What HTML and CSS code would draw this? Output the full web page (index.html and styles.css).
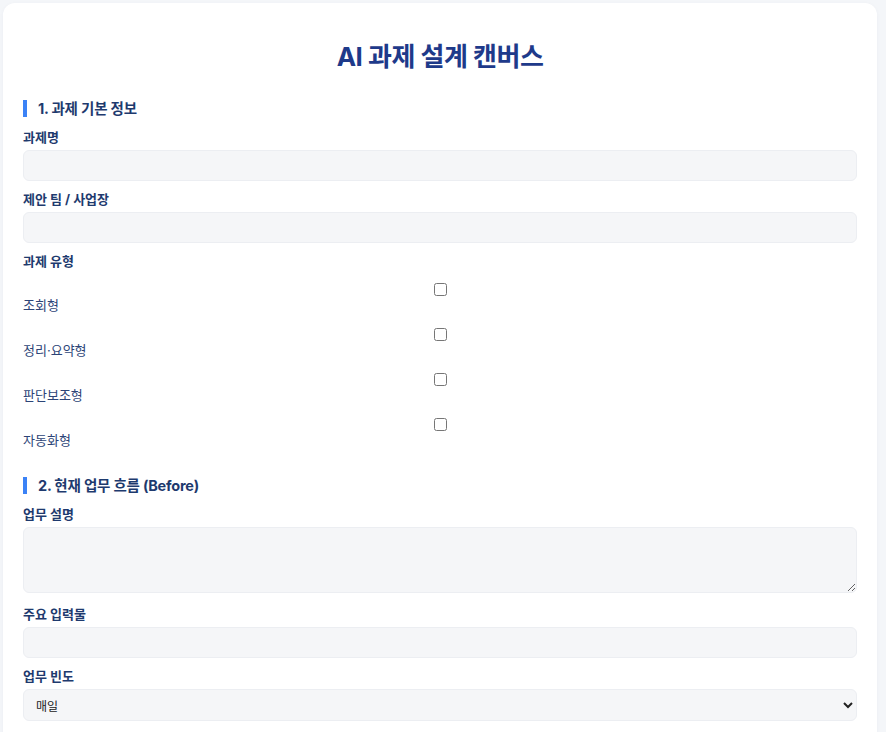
FILE: index.html
```html
<!DOCTYPE html>
<html lang="ko">
<head>
<meta charset="utf-8">
<title>AI 과제 설계 캔버스</title>
<link rel="stylesheet" href="styles.css">
</head>
<body>
<div class="card">
  <h1 class="title">AI 과제 설계 캔버스</h1>

  <section class="section">
    <h2 class="section-title">1. 과제 기본 정보</h2>
    <div class="field">
      <label class="label">과제명</label>
      <input class="control" type="text">
    </div>
    <div class="field">
      <label class="label">제안 팀 / 사업장</label>
      <input class="control" type="text">
    </div>
    <div class="field">
      <label class="label">과제 유형</label>
      <div class="options">
        <label class="option"><input class="check" type="checkbox"><span>조회형</span></label>
        <label class="option"><input class="check" type="checkbox"><span>정리·요약형</span></label>
        <label class="option"><input class="check" type="checkbox"><span>판단보조형</span></label>
        <label class="option"><input class="check" type="checkbox"><span>자동화형</span></label>
      </div>
    </div>
  </section>

  <section class="section">
    <h2 class="section-title">2. 현재 업무 흐름 (Before)</h2>
    <div class="field field-area">
      <label class="label">업무 설명</label>
      <textarea class="control area"></textarea>
    </div>
    <div class="field">
      <label class="label">주요 입력물</label>
      <input class="control" type="text">
    </div>
    <div class="field">
      <label class="label">업무 빈도</label>
      <select class="control select">
        <option>매일</option>
        <option>매주</option>
        <option>매월</option>
      </select>
    </div>
  </section>
</div>
</body>
</html>
```

FILE: styles.css
```css
* { box-sizing: border-box; }

html, body {
  margin: 0;
  background: #f4f6f9;
}

body {
  padding: 3px 0 0 3px;
  font-family: "Inter", "Noto Sans CJK KR", sans-serif;
  color: #1e3a6e;
}

.card {
  width: 874px;
  min-height: 760px;
  background: #ffffff;
  border-radius: 12px;
  padding: 20px 20px 20px 20px;
  box-shadow: 0 1px 4px rgba(30, 50, 90, 0.04);
}

.title {
  margin: 18px 0 0;
  font-size: 26px;
  line-height: 32px;
  font-weight: 700;
  text-align: center;
  color: #1e3a8a;
  letter-spacing: -0.5px;
}

.section { margin-top: 27px; }
.section + .section { margin-top: 28px; }

.section-title {
  margin: 0;
  font-size: 14.5px;
  line-height: 17px;
  font-weight: 700;
  color: #1e3a6e;
  border-left: 4px solid #3b82f6;
  padding-left: 11px;
  letter-spacing: -0.2px;
}

.field { margin-top: 10px; }
.field + .field { margin-top: 8px; }
.field-area { padding-bottom: 3px; }

.label {
  display: block;
  font-size: 13px;
  line-height: 20px;
  font-weight: 700;
  color: #1e3a6e;
  margin-bottom: 3px;
}

.control {
  display: block;
  width: 100%;
  height: 31px;
  margin: 0;
  padding: 8px;
  border: 1px solid #eceef2;
  border-radius: 6px;
  background: #f5f6f8;
  font-family: "Inter", "Noto Sans CJK KR", sans-serif;
  font-size: 12px;
  color: #222;
}

.area {
  height: 66px;
  resize: vertical;
}

.select { height: 32px; }

.options { padding-top: 9px; }

.option {
  display: block;
  margin-bottom: 14px;
  font-size: 13px;
  line-height: 18px;
  color: #2c4477;
}

.option span { display: block; }

.option:last-child { margin-bottom: 0; }

.check {
  display: block;
  width: 13px;
  height: 13px;
  margin: 0 auto;
}
```
